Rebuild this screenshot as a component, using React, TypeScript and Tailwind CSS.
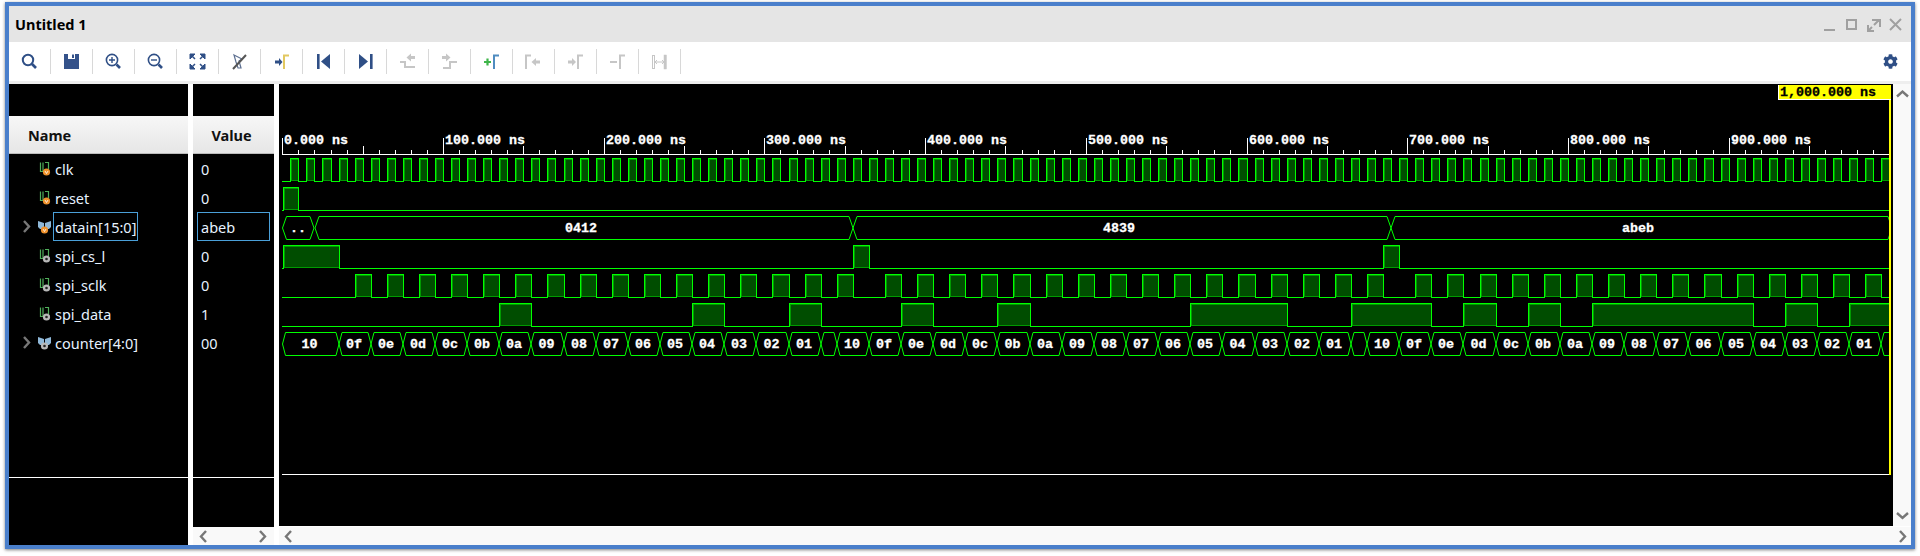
import { FaCog } from 'react-icons/fa';

const UI_FONT = 'font-["Noto_Sans",sans-serif]';
const MONO = '"Liberation Mono", monospace';

const X_END = 1889;
const GREEN = '#00ff00';

const tx = (t: number) => Math.min(Math.round(282.3 + t * 1.607), X_END + 4);
const range = (from: number, count: number, step: number) =>
  Array.from({ length: count }, (_, i) => from + i * step);

// high intervals in ns
const clkPulses: [number, number][] = range(5, 100, 10).map((t) => [t, t + 5]);
const resetPulses: [number, number][] = [[0, 10]];
const csPulses: [number, number][] = [[0, 35], [355, 365], [685, 695]];
const sclkPulses: [number, number][] = [
  ...range(45, 16, 20),
  ...range(375, 16, 20),
  ...range(705, 15, 20),
].map((t) => [t, t + 10]);
const dataPulses: [number, number][] = [
  [135, 155], [255, 275], [315, 335], [385, 405], [445, 465], [565, 625],
  [665, 715], [735, 755], [775, 795], [815, 915], [935, 955], [975, 1000],
];

const countdown = ['0f', '0e', '0d', '0c', '0b', '0a', '09', '08', '07', '06', '05', '04', '03', '02', '01'];

function buildCounter() {
  const segs: { a: number; b: number; label: string }[] = [];
  const cycle = (start: number, firstLen: number) => {
    let t = start + firstLen;
    segs.push({ a: start, b: t, label: '10' });
    countdown.forEach((label) => {
      segs.push({ a: t, b: t + 20, label });
      t += 20;
    });
    segs.push({ a: t, b: t + 10, label: '' });
  };
  cycle(0, 35);
  cycle(345, 20);
  cycle(675, 20);
  return segs;
}

function DigitalRow({ top, pulses }: { top: number; pulses: [number, number][] }) {
  const low = top + 23;
  let d = `M282 ${low + 0.5}`;
  pulses.forEach(([a, b]) => {
    const x1 = Math.max(tx(a), 283);
    const x2 = tx(b);
    d += ` H${x1 + 0.5} V${top + 0.5} H${x2 + 0.5} V${low + 0.5}`;
  });
  d += ` H${X_END + 4}`;
  return (
    <g>
      {pulses.map(([a, b]) => {
        const x1 = Math.max(tx(a), 283);
        const x2 = tx(b);
        return (
          <rect
            key={a}
            x={x1 + 1.5}
            y={top + 1.5}
            width={x2 - x1 - 1}
            height={21}
            fill="#004d00"
            stroke="#009a00"
          />
        );
      })}
      <path d={d} fill="none" stroke={GREEN} />
    </g>
  );
}

function BusSeg({ a, b, top, s }: { a: number; b: number; top: number; s: number }) {
  const bot = top + 23;
  const mid = top + 12;
  return (
    <path
      d={`M${a} ${mid} L${a + s} ${top + 0.5} H${b - s} L${b} ${mid} L${b - s} ${bot + 0.5} H${a + s} Z`}
      fill="none"
      stroke={GREEN}
    />
  );
}

function WaveText({ x, y, anchor, fill, children }: { x: number; y: number; anchor?: 'middle'; fill?: string; children: string }) {
  return (
    <text
      x={x}
      y={y}
      textAnchor={anchor}
      fill={fill ?? '#fff'}
      stroke={fill ?? '#fff'}
      strokeWidth={0.3}
      fontFamily={MONO}
      fontWeight={700}
      fontSize={13.33}
    >
      {children}
    </text>
  );
}

function Waveform() {
  const labels = range(0, 10, 100);
  const ticks = range(0, 100, 10);
  const counter = buildCounter();

  return (
    <svg viewBox="279 84 1614 442" width={1614} height={442} className="block bg-black">
      <defs>
        <clipPath id="wave-clip">
          <rect x="279" y="100" width={X_END - 279} height="380" />
        </clipPath>
      </defs>

      {/* time ruler */}
      <path d={`M282 154.5 H${X_END}`} stroke="#fff" />
      {ticks.map((t) => {
        const x = tx(t) + 0.5;
        const h = t % 100 === 0 ? 16 : t % 50 === 0 ? 8 : 4;
        return <path key={t} d={`M${x} 154 V${154 - h}`} stroke="#fff" />;
      })}
      {labels.map((t) => (
        <WaveText key={t} x={tx(t) + 2} y={144}>
          {t + '.000 ns'}
        </WaveText>
      ))}

      <g clipPath="url(#wave-clip)" shapeRendering="crispEdges">
        <DigitalRow top={158} pulses={clkPulses} />
        <DigitalRow top={187} pulses={resetPulses} />
        <DigitalRow top={245} pulses={csPulses} />
        <DigitalRow top={274} pulses={sclkPulses} />
        <DigitalRow top={303} pulses={dataPulses} />
      </g>

      <g clipPath="url(#wave-clip)">
        <BusSeg a={282.5} b={314} top={216} s={4} />
        <BusSeg a={315} b={tx(355)} top={216} s={4} />
        <BusSeg a={tx(355)} b={tx(690)} top={216} s={4} />
        <BusSeg a={tx(690)} b={1892} top={216} s={4} />
        {counter.map((c) => (
          <BusSeg key={c.a} a={c.a === 0 ? 282.5 : tx(c.a)} b={tx(c.b)} top={332} s={3} />
        ))}
      </g>

      <WaveText x={298} y={232} anchor="middle">..</WaveText>
      <WaveText x={581} y={232} anchor="middle">0412</WaveText>
      <WaveText x={1119} y={232} anchor="middle">4839</WaveText>
      <WaveText x={1638} y={232} anchor="middle">abeb</WaveText>
      {counter.map((c) =>
        c.label ? (
          <WaveText key={c.a} x={(tx(c.a) + tx(c.b)) / 2 - 1} y={348} anchor="middle">
            {c.label}
          </WaveText>
        ) : null
      )}

      {/* cursor and bottom line */}
      <path d="M282 474.5 H1889" stroke="#fff" shapeRendering="crispEdges" />
      <rect x="1889" y="99" width="2" height="376" fill="#ffff00" />
      <rect x="1778" y="85" width="113" height="15" fill="#fff" />
      <rect x="1779" y="85" width="112" height="14" fill="#ffff00" />
      <WaveText x={1780} y={96} fill="#000">1,000.000 ns</WaveText>
    </svg>
  );
}

const BLUE = '#2f4f86';
const OFF = '#c6c6c6';

function Flag({ x, color }: { x: number; color: string }) {
  return <path d={`M${x} 20 V6.5 H${x + 5}`} fill="none" stroke={color} strokeWidth={2} />;
}

const toolIcons = [
  <g key="find" fill="none" stroke={BLUE}>
    <circle cx="19" cy="11" r="5.2" strokeWidth="2" />
    <path d="M23 15 L27 19" strokeWidth="2.6" />
  </g>,
  <g key="save">
    <path d="M13 5 H28 V20 H13 Z" fill="#34528a" />
    <rect x="17" y="5" width="7" height="5" fill="#fff" />
    <rect x="21" y="5.5" width="2" height="3.5" fill="#34528a" />
  </g>,
  <g key="zoomin" fill="none" stroke={BLUE}>
    <circle cx="19" cy="11" r="5.6" strokeWidth="1.6" />
    <path d="M16 11 H22 M19 8 V14" strokeWidth="1.4" />
    <path d="M23.5 15.5 L27 19" strokeWidth="2.6" />
  </g>,
  <g key="zoomout" fill="none" stroke={BLUE}>
    <circle cx="19" cy="11" r="5.6" strokeWidth="1.6" />
    <path d="M16 11 H22" strokeWidth="1.4" />
    <path d="M23.5 15.5 L27 19" strokeWidth="2.6" />
  </g>,
  <g key="fit" fill={BLUE} stroke={BLUE}>
    <path d="M13 5 H18 L13 10 Z M28 5 H23 L28 10 Z M13 20 H18 L13 15 Z M28 20 H23 L28 15 Z" />
    <path d="M15 7 L18 10 M26 7 L23 10 M15 18 L18 15 M26 18 L23 15" strokeWidth="1.5" />
  </g>,
  <g key="cursor" fill="none">
    <path d="M15 6 L23 10 L20 12 L22 19 L19 19 L17 13 Z" stroke="#5c6f90" strokeWidth="1.2" />
    <path d="M14 20 L27 6" stroke="#555" strokeWidth="2" />
  </g>,
  <g key="marker">
    <path d="M14 11.5 H18 V9 L21.5 13 L18 17 V14.5 H14 Z" fill={BLUE} />
    <Flag x={23} color="#e2c860" />
  </g>,
  <g key="prev" fill={BLUE}>
    <rect x="14" y="5" width="2.6" height="15" />
    <path d="M27 5 V20 L18 12.5 Z" />
  </g>,
  <g key="next" fill={BLUE}>
    <path d="M14 5 V20 L23 12.5 Z" />
    <rect x="25" y="5" width="2.6" height="15" />
  </g>,
  <g key="stepback">
    <path d="M13 13 H18 V18 H28" fill="none" stroke={OFF} strokeWidth="2" />
    <path d="M28 7 H24 V4.5 L19.5 8.5 L24 12.5 V10 H28 Z" fill={OFF} />
  </g>,
  <g key="stepfwd">
    <path d="M14 19 H21 V13 H28" fill="none" stroke={OFF} strokeWidth="2" />
    <path d="M13 7 H17 V4.5 L21.5 8.5 L17 12.5 V10 H13 Z" fill={OFF} />
  </g>,
  <g key="addmarker">
    <path d="M13 13 H20 M16.5 9.5 V16.5" stroke="#3fb54a" strokeWidth="2.2" />
    <Flag x={23} color="#4f8cc0" />
  </g>,
  <g key="prevmarker">
    <Flag x={13} color={OFF} />
    <path d="M27 11.5 H23 V9 L18.5 13 L23 17 V14.5 H27 Z" fill={OFF} />
  </g>,
  <g key="nextmarker">
    <path d="M13 11.5 H17 V9 L21 13 L17 17 V14.5 H13 Z" fill={OFF} />
    <Flag x={23} color={OFF} />
  </g>,
  <g key="delmarker">
    <path d="M13 13 H20" stroke={OFF} strokeWidth="2" />
    <Flag x={23} color={OFF} />
  </g>,
  <g key="swap" fill="none" stroke={OFF}>
    <rect x="13.5" y="6.5" width="2" height="13" strokeWidth="1" />
    <rect x="25" y="6" width="2.4" height="14" fill={OFF} strokeWidth="0.5" />
    <path d="M16 13 H25 M18 11 L16 13 L18 15 M23 11 L25 13 L23 15" strokeWidth="1" />
  </g>,
];

function Toolbar() {
  return (
    <div className="flex h-[39px] justify-between bg-white pr-[13px] pt-[7px]">
      <div className="flex">
        {toolIcons.map((icon, i) => (
          <div key={i} className="h-[25px] w-[42px] border-r border-[#d8d8d8]">
            <svg viewBox="0 0 42 25" width={42} height={25} className="block">
              {icon}
            </svg>
          </div>
        ))}
      </div>
      <div className="flex h-[25px] items-center">
        <FaCog size={15} color={BLUE} />
      </div>
    </div>
  );
}

function WindowControls() {
  return (
    <div className="flex pr-[4px] pt-[9px]">
      <svg width="22" height="22" viewBox="0 0 22 22" fill="none" stroke="#a0a0a0" strokeWidth="2">
        <path d="M5 15 H16" />
      </svg>
      <svg width="22" height="22" viewBox="0 0 22 22" fill="none" stroke="#a0a0a0" strokeWidth="2">
        <rect x="6" y="5" width="9" height="9" />
      </svg>
      <svg width="22" height="22" viewBox="0 0 22 22" fill="none" stroke="#a0a0a0" strokeWidth="2">
        <path d="M9 5 H17 V12 M16 5 L11 10 M5 10 V16 H11 M5 16 L9 12" />
      </svg>
      <svg width="22" height="22" viewBox="0 0 22 22" fill="none" stroke="#a0a0a0" strokeWidth="2">
        <path d="M5 4 L16 15 M16 4 L5 15" />
      </svg>
    </div>
  );
}

function SignalIcon({ bus, accent }: { bus?: boolean; accent: 'orange' | 'gray' }) {
  const dot = accent === 'orange' ? '#f0922c' : '#b8b8b8';
  return (
    <svg width="14" height="14" viewBox="0 0 14 14" className="block">
      {bus ? (
        <path d="M0 1 L6 3 V9 H2 L0 7 Z M13 1 L7 3 V9 H11 L13 7 Z" fill="#8fb8d8" />
      ) : (
        <path d="M2.5 0.5 V9.5 H5 V0.5 M7 0.5 H10.5 V7" fill="none" stroke="#4fae5a" strokeWidth="1.2" />
      )}
      <circle cx={bus ? 6.5 : 8.5} cy="10" r="3.6" fill={dot} />
      {accent === 'orange' ? (
        <path d={bus ? 'M5 9 L6.5 11.5 L8 9' : 'M7 9 L8.5 11.5 L10 9'} fill="none" stroke="#fff" strokeWidth="0.8" />
      ) : (
        <circle cx={bus ? 6.5 : 8.5} cy="10" r="1.3" fill="#222" />
      )}
    </svg>
  );
}

function Chevron({ dir, className }: { dir: 'left' | 'right' | 'up' | 'down'; className?: string }) {
  const d = {
    left: 'M9 2 L4 7.5 L9 13',
    right: 'M4 2 L9 7.5 L4 13',
    up: 'M2 9.5 L7.5 4.5 L13 9.5',
    down: 'M2 5 L7.5 10 L13 5',
  }[dir];
  return (
    <svg width="14" height="15" viewBox="0 0 14 15" className={className} fill="none" stroke="#777" strokeWidth="2.4">
      <path d={d} />
    </svg>
  );
}

const signals = [
  { name: 'clk', value: '0', accent: 'orange' as const },
  { name: 'reset', value: '0', accent: 'orange' as const },
  { name: 'datain[15:0]', value: 'abeb', accent: 'orange' as const, bus: true, selected: true },
  { name: 'spi_cs_l', value: '0', accent: 'gray' as const },
  { name: 'spi_sclk', value: '0', accent: 'gray' as const },
  { name: 'spi_data', value: '1', accent: 'gray' as const },
  { name: 'counter[4:0]', value: '00', accent: 'gray' as const, bus: true },
];

const headerCls =
  'flex h-[38px] items-center border-b border-[#bcbcbc] bg-gradient-to-b from-[#f7f7f7] to-[#e6e6e6] pt-[2px] text-[14.5px] font-bold text-[#111]';

function NameColumn() {
  return (
    <div className="flex w-[179px] flex-col bg-black">
      <div className="h-[32px]" />
      <div className={`${headerCls} pl-[19px]`}>Name</div>
      {signals.map((s) => (
        <div key={s.name} className="flex h-[29px] items-center text-[14.5px] text-[#e6f2ff]">
          <div className="w-[29px] pl-[11px]">{s.bus && <Chevron dir="right" />}</div>
          <SignalIcon bus={s.bus} accent={s.accent} />
          <span
            className={`ml-px flex h-[29px] items-center border px-[1px] pt-[2px] ${
              s.selected ? 'border-[#4a9fd8]' : 'border-transparent'
            }`}
          >
            {s.name}
          </span>
        </div>
      ))}
      <div className="flex-1" />
      <div className="h-[68px] border-t border-white" />
    </div>
  );
}

function ValueColumn() {
  return (
    <div className="flex w-[81px] flex-col bg-black">
      <div className="h-[32px]" />
      <div className={`${headerCls} justify-center pr-[4px]`}>Value</div>
      {signals.map((s) => (
        <div key={s.name} className="flex h-[29px] pl-[4px] text-[14.5px] text-[#e6f2ff]">
          <span
            className={`flex h-[29px] w-[73px] items-center border pl-[3px] pt-[2px] ${
              s.selected ? 'border-[#4a9fd8]' : 'border-transparent'
            }`}
          >
            {s.value}
          </span>
        </div>
      ))}
      <div className="flex-1" />
      <div className="h-[50px] border-t border-white" />
      <div className="flex h-[18px] items-center justify-between bg-[#f9f9f9] px-[4px]">
        <Chevron dir="left" />
        <Chevron dir="right" />
      </div>
    </div>
  );
}

function WavePanel() {
  return (
    <div className="flex flex-1 flex-col">
      <div className="flex h-[442px]">
        <Waveform />
        <div className="flex w-[18px] flex-col items-center justify-between bg-[#f9f9f9] py-[3px]">
          <Chevron dir="up" />
          <Chevron dir="down" />
        </div>
      </div>
      <div className="h-[1px] bg-white" />
      <div className="flex h-[18px] items-center justify-between bg-[#f9f9f9] pl-[3px] pr-[1px]">
        <Chevron dir="left" />
        <Chevron dir="right" />
      </div>
    </div>
  );
}

export default function App() {
  return (
    <div className={`h-[556px] w-[1920px] overflow-hidden bg-white pl-[5px] pt-[2px] ${UI_FONT}`}>
      <div className="flex h-[547px] w-[1910px] flex-col border-4 border-[#4a7fcb] bg-white shadow-[0_1px_3px_rgba(0,0,0,0.5)]">
        <div className="flex h-[36px] items-start justify-between bg-[#e5e5e5]">
          <span className="pl-[6px] pt-[8px] text-[14.5px] font-bold leading-[20px] text-black">Untitled 1</span>
          <WindowControls />
        </div>
        <Toolbar />
        <div className="h-[3px] bg-[#eeeeee]" />
        <div className="flex h-[461px] gap-[5px]">
          <NameColumn />
          <ValueColumn />
          <WavePanel />
        </div>
      </div>
    </div>
  );
}
